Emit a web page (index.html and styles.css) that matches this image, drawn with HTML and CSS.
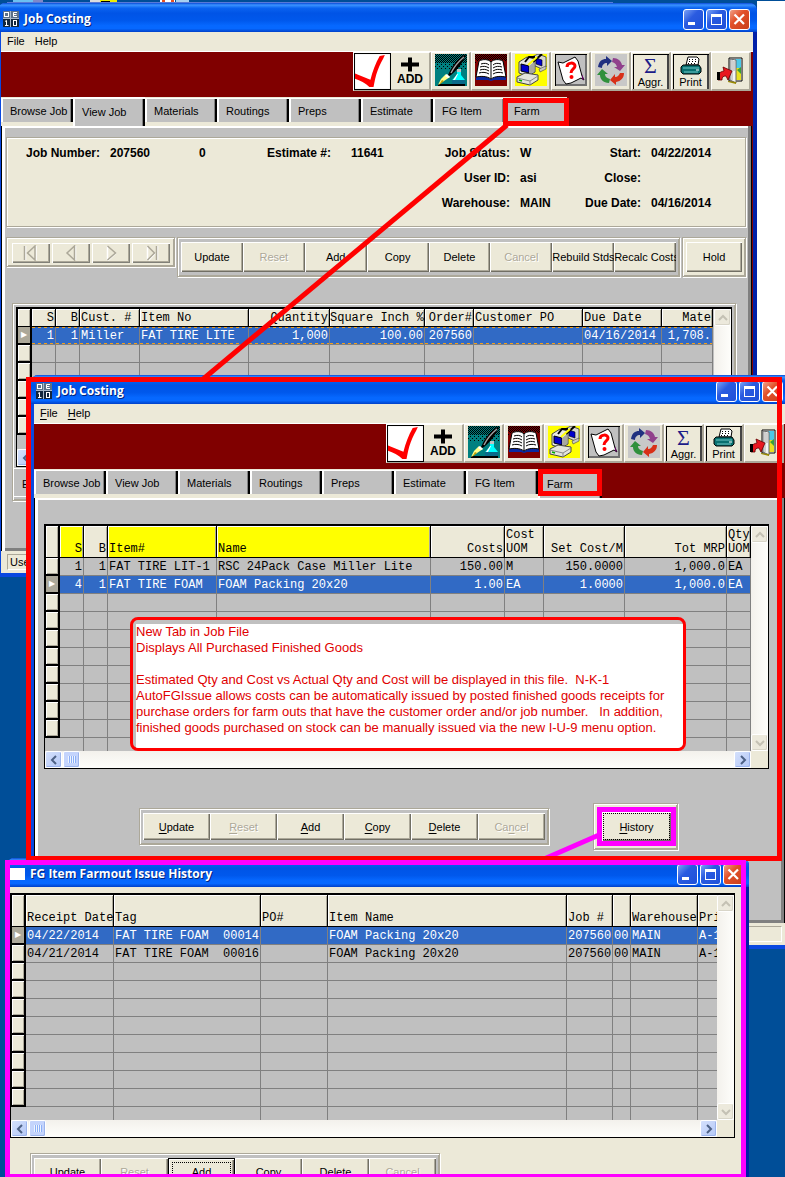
FILE: index.html
```html
<!DOCTYPE html>
<html lang="en">
<head>
<meta charset="utf-8">
<title>Job Costing</title>
<link rel="stylesheet" href="styles.css">
</head>
<body>
<svg class="defs" aria-hidden="true">
  <defs>
    <pattern id="dots" width="2" height="2" patternUnits="userSpaceOnUse"><path d="M0 0h1v1h-1zM1 1h1v1h-1z" fill="#000"/></pattern>
    <pattern id="dots2" width="4" height="4" patternUnits="userSpaceOnUse"><path d="M0 0h1v1h-1zM2 2h1v1h-1z" fill="#000"/></pattern>
  </defs>
  <symbol id="i-app" viewBox="0 0 16 16">
    <rect width="16" height="16" fill="#a8b8c8"/>
    <path d="M0 0h7v7H0zM8 0h8v7H8z" fill="#5c7088"/><path d="M0 8h7v8H0zM8 8h8v8H8z" fill="#12263e"/>
    <g fill="none" stroke="#fff" stroke-width="1"><rect x="1.500" y="1.500" width="4" height="4"/><path d="M14 1.500h-3.500v4H14M11 3.500h2.500M2 10.500l1.500-1v5M2 14.500h3.500"/><rect x="10.500" y="9.500" width="3" height="5"/></g>
  </symbol>
  <symbol id="i-check" viewBox="0 0 36 36">
    <rect x=".5" y=".5" width="35" height="35" fill="#fff" stroke="#000"/>
    <path d="M1 20l15 6c2-8 5-16 9-23l5-1c-2 5-5 9-7 15-2 5-3 11-4 16h-4C11 29 6 27 1 25z" fill="#f00"/>
  </symbol>
  <symbol id="i-plus" viewBox="0 0 18 16"><path d="M7 1h4v5h7v4h-7v5H7v-5H0V6h7z" fill="#000"/></symbol>
  <symbol id="i-pen" viewBox="0 0 32 32">
    <rect width="32" height="32" fill="#008080"/><rect width="32" height="9" fill="url(#dots)"/><rect y="9" width="32" height="6" fill="url(#dots2)"/>
    <path d="M3 30h27v2H3z" fill="#000"/>
    <path d="M31 0C24 4 18 10 14 19l-2 4 4-2c7-6 12-12 15-21z" fill="#000"/>
    <path d="M29 3c-5 4-10 10-13 16" stroke="#a0a0a0" fill="none" stroke-width="1.500"/>
    <path d="M11 20l4 3-6 4-6 4 3-6z" fill="#ff8"/><path d="M12 20l3 3-2 1-3-2z" fill="#fff"/><path d="M7 26l-3 5 5-4z" fill="#c0a000"/>
    <path d="M22 16h4v5l4 5v4H17v-4l5-5z" fill="#0ff"/><path d="M22 15h4v3h-4z" fill="#c0c0c0"/><path d="M17 26h13v4H17z" fill="#0a6a8a"/><path d="M22 20l-4 6h2l3-6z" fill="#fff"/>
  </symbol>
  <symbol id="i-book" viewBox="0 0 32 32">
    <rect width="32" height="32" fill="#800000"/><rect width="32" height="6" fill="url(#dots)"/><rect y="6" width="32" height="4" fill="url(#dots2)"/>
    <path d="M1 23h30v3H19l-3 1-3-1H1z" fill="#0a2aa0"/>
    <path d="M4 7c4-2 9-2 12 1 3-3 8-3 12-1l3 16c-5-1-11-1-15 2-4-3-10-3-15-2z" fill="#fff" stroke="#000"/>
    <path d="M16 8v16M6 10c3-1 6-1 8 1M5 13c3-1 6-1 9 1M5 16c3-1 6-1 9 1M4 19c3-1 7-1 10 1M26 10c-3-1-6-1-8 1M27 13c-3-1-6-1-9 1M27 16c-3-1-6-1-9 1M28 19c-3-1-7-1-10 1" fill="none" stroke="#000"/>
  </symbol>
  <symbol id="i-pcs" viewBox="0 0 32 32">
    <rect width="32" height="32" fill="#ff0"/>
    <path d="M17 3l6-3 8 3v10l-4 2-9-4z" fill="#d8d8d0" stroke="#555"/><path d="M21 4l6 2v6l-6-2z" fill="#00c" stroke="#000" stroke-width=".6"/><path d="M24 15l7-3v3l-6 3z" fill="#c8c8c0" stroke="#444" stroke-width=".6"/>
    <path d="M4 8l8-5 8 2v13l-7 4-9-3z" fill="#e8e8e0" stroke="#444"/><path d="M6 10l8 2v7l-8-2z" fill="#00c" stroke="#000"/><path d="M14 12l5-4v10l-5 3z" fill="#a8a8a0"/>
    <path d="M2 23l8-4 13 2v5l-8 5-13-3z" fill="#e4e4dc" stroke="#444"/><path d="M2 24l13 3 8-5M15 27v4" fill="none" stroke="#888"/><path d="M4 26l3 1" stroke="#0a0" stroke-width="1.500"/>
    <path d="M10 8L14 3 20 3M18 8L27 0" fill="none" stroke="#000" stroke-width="2"/><path d="M13 11L22 3" stroke="#ff0" stroke-width="2"/>
  </symbol>
  <symbol id="i-ask" viewBox="0 0 32 32">
    <rect x=".5" y=".5" width="31" height="31" fill="#c0c0c0" stroke="#000"/><path d="M1 31h30V1" fill="none" stroke="#707070" stroke-width="2"/>
    <path d="M3 8l5 1 12-6 3 4 4 15 2 4-3-2-10 5-5 1-3-4z" fill="#fff" stroke="#000"/><path d="M27 20l2 6-2-1z" fill="#606"/>
    <path d="M12 13c0-5 8-5 8-1 0 3-4 3-4 7" fill="none" stroke="#f00" stroke-width="3"/><circle cx="16.500" cy="23" r="2" fill="#f00"/>
  </symbol>
  <symbol id="i-cycle" viewBox="0 0 32 32">
    <rect width="32" height="32" fill="#c8c8c8"/>
    <path d="M3 13C4 7 7 5 11 5V2l6 5-5 5V9c-3 0-5 2-5 5z" fill="#203080"/>
    <path d="M18 4c5 0 8 3 9 7h3l-5 6-6-4h3c-1-3-2-4-5-5z" fill="#90408c"/>
    <path d="M29 19c0 5-3 8-8 9v3l-6-5 5-6v3c3 0 4-2 5-4z" fill="#d83018"/>
    <path d="M14 29c-6 0-9-4-9-8H2l5-6 6 5h-3c0 3 2 4 5 5z" fill="#30903c"/>
  </symbol>
  <symbol id="i-print" viewBox="0 0 22 20">
    <path d="M6 9L8 1h9l2 2-1 6z" fill="#fff" stroke="#000"/><path d="M9 3.500h1M12 3.500h1M15 3.500h1M9 5.500h1M12 5.500h1M15 5.500h1M8 7.500h1M11 7.500h1M14 7.500h1" stroke="#000"/>
    <path d="M3 9h16l2 3v4l-2 2H3l-2-2v-5z" fill="#087070" stroke="#000"/><path d="M3 12h16M4 16h14" stroke="#70c8c8"/><path d="M16 14h3" stroke="#fff"/>
  </symbol>
  <symbol id="i-exit" viewBox="0 0 32 32">
    <path d="M14 4h13v23H14z" fill="#fff" stroke="#000"/><path d="M20 5h6v9h-6z" fill="#4cc8e8"/><path d="M20 14h6v12h-6z" fill="#e8e020"/><path d="M22 16l4-3v7z" fill="#38a038"/>
    <path d="M15 5l6 1v23l-6-3z" fill="#f4f4f4" stroke="#666"/><path d="M17 6v20M19 7v10" stroke="#aaa" fill="none"/><path d="M13 27l8 1v2l-8-2z" fill="#988800"/>
    <path d="M3 26c0-6 1-8 6-9l-1-4 9 4-4 9-2-4c-3 0-4 1-4 4z" fill="#e81820" stroke="#600" stroke-width=".8"/><path d="M2 18h3v8H2z" fill="#000"/>
  </symbol>
  <symbol id="i-min" viewBox="0 0 21 21"><path d="M5 13h7v3H5z" fill="#fff"/></symbol>
  <symbol id="i-max" viewBox="0 0 21 21"><path d="M5 5h11v11H5zM6 8v7h9V8z" fill="#fff" fill-rule="evenodd"/></symbol>
  <symbol id="i-close" viewBox="0 0 21 21"><path d="M5.500 5.500l9.500 9.500M15 5.500L5.500 15" stroke="#fff" stroke-width="2.200"/></symbol>
  <symbol id="i-chev" viewBox="0 0 10 10"><path d="M7 1L3 5l4 4" fill="none" stroke="currentColor" stroke-width="2"/></symbol>
  <symbol id="i-prev" viewBox="0 0 22 16"><path d="M15.500 1v14" fill="none" stroke="#fff" stroke-width="1.500"/><path d="M14.500 1v14L7 8z" fill="none" stroke="#aca899" stroke-width="1.500"/></symbol>
  <symbol id="i-next" viewBox="0 0 22 16"><path d="M16 8L8 15.500M7.500 1v14" fill="none" stroke="#fff" stroke-width="1.500"/><path d="M7.500 1l8 7-8 7" fill="none" stroke="#aca899" stroke-width="1.500"/></symbol>
  <symbol id="i-first" viewBox="0 0 22 16"><path d="M5.500 1v14M16 1v14" fill="none" stroke="#fff" stroke-width="1.500"/><path d="M4.500 1v14M15 1v14L7.500 8z" fill="none" stroke="#aca899" stroke-width="1.500"/></symbol>
  <symbol id="i-last" viewBox="0 0 22 16"><path d="M17.500 1v14M7.500 1v14M15.500 8l-7 7.500" fill="none" stroke="#fff" stroke-width="1.500"/><path d="M7.500 1l7 7-7 7M16.500 1v14" fill="none" stroke="#aca899" stroke-width="1.500"/></symbol>
</svg>

<main class="desktop">
  <svg class="shortcuts" viewBox="0 0 620 4" aria-hidden="true">
    <path d="M13 0h20v4H13z" fill="#6cc0f0"/><path d="M33 0h10v4H33z" fill="#8088c8"/>
    <path d="M90 0h10v4H90z" fill="#ddd"/><path d="M100 0h17v4h-17z" fill="#ee0"/><path d="M101 1h9v2h-9z" fill="#000"/>
    <path d="M160 0h15v4h-15z" fill="#fff"/><path d="M162 0h3v4h-3zM171 0h3v4h-3z" fill="#e85020"/><path d="M176 0h13v4h-13z" fill="#a8d0f0"/>
    <path d="M7 2h606v1H7z" fill="#5878d8"/>
  </svg>
  <div class="sheet"></div>

  <section class="window window-job">
    <header class="titlebar">
      <svg class="app-icon"><use href="#i-app"/></svg><h1>Job Costing</h1>
      <button class="sys" aria-label="Minimize"><svg><use href="#i-min"/></svg></button><button class="sys" aria-label="Maximize"><svg><use href="#i-max"/></svg></button><button class="sys sys-close" aria-label="Close"><svg><use href="#i-close"/></svg></button>
    </header>
    <nav class="menubar"><button>File</button><button>Help</button></nav>
    <div class="toolbar">
      <button class="tool tool-check" aria-label="Check"><svg><use href="#i-check"/></svg></button>
      <button class="tool tool-add"><svg><use href="#i-plus"/></svg><span>ADD</span></button>
      <button class="tool" aria-label="Notes"><svg><use href="#i-pen"/></svg></button>
      <button class="tool" aria-label="Log"><svg><use href="#i-book"/></svg></button>
      <button class="tool" aria-label="Transfer"><svg><use href="#i-pcs"/></svg></button>
      <button class="tool" aria-label="Question"><svg><use href="#i-ask"/></svg></button>
      <button class="tool" aria-label="Refresh"><svg><use href="#i-cycle"/></svg></button>
      <button class="tool tool-text"><span class="sigma">Σ</span><span>Aggr.</span></button>
      <button class="tool tool-text"><svg><use href="#i-print"/></svg><span>Print</span></button>
      <button class="tool" aria-label="Exit"><svg><use href="#i-exit"/></svg></button>
    </div>
    <nav class="tabs">
      <button class="tab">Browse Job</button><button class="tab active">View Job</button><button class="tab">Materials</button><button class="tab">Routings</button><button class="tab">Preps</button><button class="tab">Estimate</button><button class="tab">FG Item</button><button class="tab tab-last">Farm<i class="mark"></i></button>
    </nav>
    <div class="body body-job">
      <dl class="info">
        <dt>Job Number:</dt><dd>207560</dd><dd>0</dd><dt>Estimate #:</dt><dd class="est">11641</dd><dt>Job Status:</dt><dd>W</dd><dt>Start:</dt><dd>04/22/2014</dd>
        <dt class="c6">User ID:</dt><dd>asi</dd><dt>Close:</dt><dd></dd>
        <dt class="c6">Warehouse:</dt><dd>MAIN</dd><dt>Due Date:</dt><dd>04/16/2014</dd>
      </dl>
      <div class="actions">
        <div class="etched pager">
          <button disabled aria-label="First"><svg><use href="#i-first"/></svg></button><button disabled aria-label="Previous"><svg><use href="#i-prev"/></svg></button><button disabled aria-label="Next"><svg><use href="#i-next"/></svg></button><button disabled aria-label="Last"><svg><use href="#i-last"/></svg></button>
        </div>
        <div class="etched group group-wide">
          <button class="btn">Update</button><button class="btn" disabled>Reset</button><button class="btn">Add</button><button class="btn">Copy</button><button class="btn">Delete</button><button class="btn" disabled>Cancel</button><button class="btn">Rebuild Stds</button><button class="btn">Recalc Costs</button>
        </div>
        <div class="etched group hold"><button class="btn">Hold</button></div>
      </div>
      <div class="frame etched">
        <div class="browse browse-short">
          <div class="view">
            <table>
              <colgroup><col class="w15"><col class="w24"><col class="w24"><col class="w60"><col class="w109"><col class="w81"><col class="w95"><col class="w49"><col class="w109"><col class="w79"><col class="w51"></colgroup>
              <thead><tr><th></th><th class="r">S</th><th class="r">B</th><th>Cust. #</th><th>Item No</th><th class="r">Quantity</th><th class="r">Square Inch %</th><th class="r">Order#</th><th>Customer PO</th><th>Due Date</th><th class="r">Mate</th></tr></thead>
              <tbody>
                <tr class="selected dashed"><td>▶</td><td class="r">1</td><td class="r">1</td><td>Miller</td><td>FAT TIRE LITE</td><td class="r">1,000</td><td class="r">100.00</td><td class="r">207560</td><td></td><td>04/16/2014</td><td class="r">1,708.</td></tr>
                <tr><td><td><td><td><td><td><td><td><td><td><td></tr>
                <tr><td><td><td><td><td><td><td><td><td><td><td></tr>
                <tr><td><td><td><td><td><td><td><td><td><td><td></tr>
                <tr><td><td><td><td><td><td><td><td><td><td><td></tr>
                <tr><td><td><td><td><td><td><td><td><td><td><td></tr>
              </tbody>
            </table>
          </div>
          <div class="vscroll"><button aria-label="Scroll up"><svg class="up"><use href="#i-chev"/></svg></button><button aria-label="Scroll down"><svg class="down"><use href="#i-chev"/></svg></button></div>
          <div class="hscroll"><button aria-label="Scroll left"><svg><use href="#i-chev"/></svg></button><span class="thumb"></span><button class="end" aria-label="Scroll right"><svg class="right"><use href="#i-chev"/></svg></button></div>
        </div>
        <p class="hint">E</p>
      </div>
    </div>
    <footer class="status"><span>Use</span></footer>
  </section>

  <section class="window window-farm">
    <header class="titlebar">
      <svg class="app-icon"><use href="#i-app"/></svg><h2>Job Costing</h2>
      <button class="sys" aria-label="Minimize"><svg><use href="#i-min"/></svg></button><button class="sys" aria-label="Maximize"><svg><use href="#i-max"/></svg></button><button class="sys sys-close" aria-label="Close"><svg><use href="#i-close"/></svg></button>
    </header>
    <nav class="menubar"><button><u>F</u>ile</button><button><u>H</u>elp</button></nav>
    <div class="toolbar">
      <button class="tool tool-check" aria-label="Check"><svg><use href="#i-check"/></svg></button>
      <button class="tool tool-add"><svg><use href="#i-plus"/></svg><span>ADD</span></button>
      <button class="tool" aria-label="Notes"><svg><use href="#i-pen"/></svg></button>
      <button class="tool" aria-label="Log"><svg><use href="#i-book"/></svg></button>
      <button class="tool" aria-label="Transfer"><svg><use href="#i-pcs"/></svg></button>
      <button class="tool" aria-label="Question"><svg><use href="#i-ask"/></svg></button>
      <button class="tool" aria-label="Refresh"><svg><use href="#i-cycle"/></svg></button>
      <button class="tool tool-text"><span class="sigma">Σ</span><span>Aggr.</span></button>
      <button class="tool tool-text"><svg><use href="#i-print"/></svg><span>Print</span></button>
      <button class="tool" aria-label="Exit"><svg><use href="#i-exit"/></svg></button>
    </div>
    <nav class="tabs">
      <button class="tab">Browse Job</button><button class="tab">View Job</button><button class="tab">Materials</button><button class="tab">Routings</button><button class="tab">Preps</button><button class="tab">Estimate</button><button class="tab">FG Item</button><button class="tab tab-last active">Farm<i class="mark"></i></button>
    </nav>
    <div class="body body-farm">
      <div class="browse">
        <div class="view">
          <table class="tall">
            <colgroup><col class="w15"><col class="w24"><col class="w24"><col class="w109"><col class="w214"><col class="w74"><col class="w39"><col class="w81"><col class="w102"><col class="w24"></colgroup>
            <thead><tr><th></th><th class="r key">S</th><th class="r">B</th><th class="key">Item#</th><th class="key">Name</th><th class="r">Costs</th><th>Cost<br>UOM</th><th class="r">Set Cost/M</th><th class="r">Tot MRP</th><th>Qty<br>UOM</th></tr></thead>
            <tbody>
              <tr><td></td><td class="r">1</td><td class="r">1</td><td>FAT TIRE LIT-1</td><td>RSC 24Pack Case Miller Lite</td><td class="r">150.00</td><td>M</td><td class="r">150.0000</td><td class="r">1,000.0</td><td>EA</td></tr>
              <tr class="selected"><td>▶</td><td class="r">4</td><td class="r">1</td><td>FAT TIRE FOAM</td><td>FOAM Packing 20x20</td><td class="r">1.00</td><td>EA</td><td class="r">1.0000</td><td class="r">1,000.0</td><td>EA</td></tr>
              <tr><td><td><td><td><td><td><td><td><td><td></tr>
              <tr><td><td><td><td><td><td><td><td><td><td></tr>
              <tr><td><td><td><td><td><td><td><td><td><td></tr>
              <tr><td><td><td><td><td><td><td><td><td><td></tr>
              <tr><td><td><td><td><td><td><td><td><td><td></tr>
              <tr><td><td><td><td><td><td><td><td><td><td></tr>
              <tr><td><td><td><td><td><td><td><td><td><td></tr>
              <tr><td><td><td><td><td><td><td><td><td><td></tr>
              <tr class="part"><td><td><td><td><td><td><td><td><td><td></tr>
            </tbody>
          </table>
        </div>
        <div class="vscroll"><button aria-label="Scroll up"><svg class="up"><use href="#i-chev"/></svg></button><button aria-label="Scroll down"><svg class="down"><use href="#i-chev"/></svg></button></div>
        <div class="hscroll"><button aria-label="Scroll left"><svg><use href="#i-chev"/></svg></button><span class="thumb"></span><button class="end" aria-label="Scroll right"><svg class="right"><use href="#i-chev"/></svg></button></div>
      </div>
      <div class="farm-actions">
        <div class="etched group">
          <button class="btn"><u>U</u>pdate</button><button class="btn" disabled><u>R</u>eset</button><button class="btn"><u>A</u>dd</button><button class="btn"><u>C</u>opy</button><button class="btn"><u>D</u>elete</button><button class="btn" disabled>Ca<u>n</u>cel</button>
        </div>
        <div class="etched history"><button class="btn"><u>H</u>istory</button></div>
      </div>
    </div>
    <footer class="status"><span></span></footer>
  </section>

  <aside class="note">
    <p>New Tab in Job File
Displays All Purchased Finished Goods

Estimated Qty and Cost vs Actual Qty and Cost will be displayed in this file.  N-K-1
AutoFGIssue allows costs can be automatically issued by posted finished goods receipts for
purchase orders for farm outs that have the customer order and/or job number.   In addition,
finished goods purchased on stock can be manually issued via the new I-U-9 menu option.</p>
  </aside>

  <section class="window window-history">
    <header class="titlebar">
      <span class="blank-icon"></span><h2>FG Item Farmout Issue History</h2>
      <button class="sys" aria-label="Minimize"><svg><use href="#i-min"/></svg></button><button class="sys" aria-label="Maximize"><svg><use href="#i-max"/></svg></button><button class="sys sys-close" aria-label="Close"><svg><use href="#i-close"/></svg></button>
    </header>
    <div class="body-history">
      <div class="browse">
        <div class="view">
          <table class="tall">
            <colgroup><col class="w15"><col class="w88"><col class="w147"><col class="w67"><col class="w239"><col class="w46"><col class="w18"><col class="w67"><col class="w24"></colgroup>
            <thead><tr><th></th><th>Receipt Date</th><th>Tag</th><th>PO#</th><th>Item Name</th><th>Job #</th><th></th><th>Warehouse</th><th>Pri</th></tr></thead>
            <tbody>
              <tr class="selected"><td>▶</td><td>04/22/2014</td><td>FAT TIRE FOAM  00014</td><td></td><td>FOAM Packing 20x20</td><td>207560</td><td>00</td><td>MAIN</td><td>A-1</td></tr>
              <tr><td></td><td>04/21/2014</td><td>FAT TIRE FOAM  00016</td><td></td><td>FOAM Packing 20x20</td><td>207560</td><td>00</td><td>MAIN</td><td>A-1</td></tr>
              <tr><td><td><td><td><td><td><td><td><td></tr>
              <tr><td><td><td><td><td><td><td><td><td></tr>
              <tr><td><td><td><td><td><td><td><td><td></tr>
              <tr><td><td><td><td><td><td><td><td><td></tr>
              <tr><td><td><td><td><td><td><td><td><td></tr>
              <tr><td><td><td><td><td><td><td><td><td></tr>
              <tr><td><td><td><td><td><td><td><td><td></tr>
              <tr><td><td><td><td><td><td><td><td><td></tr>
              <tr class="part"><td><td><td><td><td><td><td><td><td></tr>
            </tbody>
          </table>
        </div>
        <div class="vscroll"><button aria-label="Scroll up"><svg class="up"><use href="#i-chev"/></svg></button><button aria-label="Scroll down"><svg class="down"><use href="#i-chev"/></svg></button></div>
        <div class="hscroll"><button aria-label="Scroll left"><svg><use href="#i-chev"/></svg></button><span class="thumb"></span><button class="end" aria-label="Scroll right"><svg class="right"><use href="#i-chev"/></svg></button></div>
      </div>
      <div class="etched group">
        <button class="btn">Update</button><button class="btn" disabled>Reset</button><button class="btn focused">Add</button><button class="btn">Copy</button><button class="btn">Delete</button><button class="btn" disabled>Cancel</button>
      </div>
    </div>
  </section>

  <svg class="connectors" width="785" height="1177" aria-hidden="true">
    <path d="M507 125L202 380" stroke="#f00" stroke-width="5"/>
    <path d="M599 835L544 859" stroke="#f0f" stroke-width="5"/>
  </svg>
  <div class="outline outline-farm"></div>
  <div class="outline outline-history"></div>
</main>
</body>
</html>
```
FILE: styles.css
```css
* { box-sizing: border-box; }
body { margin: 0; font: 11px/14px "Liberation Sans", Arial, sans-serif; color: #000; }
button { font: inherit; color: inherit; margin: 0; padding: 0; border: 0; background: none; }
svg { display: block; }
h1, h2, p, dl, dd { margin: 0; }
.defs { position: absolute; width: 0; height: 0; }

.desktop { position: relative; height: 100vh; min-height: 1177px; overflow: hidden; background: #004e98; }
.shortcuts { position: absolute; left: 0; top: 0; width: 620px; height: 4px; }
.sheet { position: absolute; right: 0; top: 1px; width: 28px; height: 375px; background: #fff; }

/* Windows */
.window { position: absolute; background: #ece9d8; border: solid #0a48e0; border-width: 0 4px 4px 3px; border-right-color: #0020a8; border-radius: 7px 7px 0 0; box-shadow: inset 0 1px #0a48e0; }
.window-job { left: -2px; right: 28px; top: 3px; }
.window-farm { left: 31px; right: -5px; top: 375px; }
.window-history { left: 7px; right: 36px; top: 858px; }
.titlebar { display: flex; align-items: center; gap: 2px; height: 29px; margin: 0 -4px 0 -3px; padding: 3px 7px 0 5px; border-radius: 7px 7px 0 0;
  background: linear-gradient(#0a4ad8 0, #3a93ff 7%, #0a62f0 18%, #0054e6 35%, #0058ec 60%, #0668ff 78%, #0668ff 88%, #0040c8 100%); }
.window-history .titlebar { padding: 3px 5px 0 3px; }
.titlebar h1, .titlebar h2 { flex: 1; margin-left: 3px; font: bold 12px/16px "Open Sans", "Noto Sans", sans-serif; color: #fff; text-shadow: 1px 1px #00247c; white-space: nowrap; }
.app-icon { width: 16px; height: 16px; }
.blank-icon { width: 15px; height: 12px; background: #fff; }
.sys { width: 21px; height: 21px; border: 1px solid #fff; border-radius: 3px; background: linear-gradient(135deg, #7ba2f5, #2a5be0 40%, #1e50d8); }
.sys svg { width: 21px; height: 21px; margin: -1px; }
.sys-close { background: linear-gradient(135deg, #f0a088, #e2512a 40%, #c8401c); }
.menubar { display: flex; gap: 10px; height: 20px; padding: 0 6px 1px; border-bottom: 1px solid #fff; line-height: 18px; }
u { text-decoration: underline; text-underline-offset: 2px; }

.toolbar { display: flex; justify-content: flex-end; height: 45px; padding: 0 2px 6px 0; background: #800000; }
.tool { display: flex; flex-direction: column; align-items: center; width: 40px; height: 39px; padding-top: 1px; background: #ece9d8; border: solid #aca899; border-width: 1px 2px 2px 1px; border-top-color: #fff; border-left-color: #fff; }
.tool svg { width: 32px; height: 32px; }
.tool-check { width: 38px; padding: 0; border-width: 1px 0 1px 1px; }
.tool-check svg { width: 37px; height: 37px; }
.tool-add { padding-top: 3px; font-weight: bold; font-size: 12px; line-height: 13px; border-left: 0; }
.tool-add svg { width: 18px; height: 17px; }
.tool-text { padding: 1px 0 0; font-size: 11px; line-height: 12px; box-shadow: inset 1px 1px #ece9d8, inset 2px 2px #000, inset -2px 0 #444; }
.tool-text svg { width: 22px; height: 20px; margin-top: 2px; }
.sigma { height: 22px; font: 22px/24px "Liberation Serif", serif; color: #1c1c88; }

.tabs { display: flex; align-items: flex-end; height: 29px; background: linear-gradient(#800000, #800000) right / calc(100% - 566px) 100% no-repeat, #ece9d8; }
.tab { flex: none; width: 72px; height: 24px; margin-bottom: 4px; padding: 1px 0 0 7px; text-align: left; white-space: nowrap; overflow: hidden; background: #c0c0c0; border: solid #fff; border-width: 1px 0 0 2px; box-shadow: inset -2px 0 #000, inset -3px 0 #808080; }
.tab.active { height: 29px; margin-bottom: 0; padding-bottom: 2px; border-top-width: 2px; position: relative; }
.tab-last { position: relative; width: 64px; overflow: visible; }
.mark { position: absolute; inset: -1px 0 -4px -4px; border: 5px solid #f00; }
.active .mark { inset: -2px 0 2px -2px; }

.body { background: #c0c0c0; box-shadow: inset -1px 0 #800000, inset -2px 0 #000, inset -5px 0 #808080, inset 1px 0 #000, inset 4px 0 #fff, inset 0 2px #fff, inset 0 -3px #808080; min-height: 425px; }
.status { height: 22px; padding: 3px 4px 3px 6px; display: flex; }
.status span { flex: 1; border: 1px solid; border-color: #aca899 #fff #fff #aca899; line-height: 14px; padding-left: 2px; }

.etched { border: 1px solid #aca899; box-shadow: inset 1px 1px #fff, inset -1px -1px #aca899, 1px 1px #fff; }

/* Job header */
.body-job { padding: 11px 7px 0 5px; }
.info { display: grid; grid-template-columns: 93px 89px 33px 109px 86px 93px 95px 36px 1fr; grid-auto-rows: 25px; align-items: center; height: 90px; padding-top: 2px; background: #ece9d8; border: 1px solid #aca899; box-shadow: inset 1px 1px #fff, 1px 1px #fff; font-weight: bold; font-size: 12px; line-height: 14px; white-space: nowrap; }
.info dt { justify-self: end; }
.info dd { padding-left: 10px; }
.info .est { padding-left: 20px; }
.info .c6 { grid-column: 6; }

.actions { display: flex; align-items: flex-start; gap: 2px; margin-top: 10px; }
.pager { display: flex; gap: 2px; padding: 5px 4px 4px 5px; background: #ece9d8; height: 30px; }
.pager button { display: flex; align-items: center; justify-content: center; width: 38px; height: 20px; background: #ece9d8; box-shadow: inset 1px 1px #fff, inset -1px -1px #808078, inset -2px -2px #aca899; }
.pager svg { width: 22px; height: 16px; }
.group { display: flex; padding: 4px 3px; background: #c0c0c0; }
.btn { width: 67px; height: 27px; overflow: hidden; white-space: nowrap; background: #ece9d8; box-shadow: inset 1px 1px #fff, inset -1px -1px #716f64, inset -2px -2px #aca899; }
.btn:disabled { color: #aca899; text-shadow: 1px 1px #fff; }
.group-wide { flex: 1; min-width: 0; }
.group-wide .btn { flex: 1; width: 0; min-width: 0; height: 30px; }
.hold { flex: none; width: 64px; background: #ece9d8; }
.hold .btn { width: 100%; height: 30px; }

/* Browse grids */
.frame { margin: 26px 10px 0 6px; padding: 3px; }
.browse { display: grid; grid-template: 1fr 17px / 1fr 17px; height: 245px; border: solid #000; border-width: 2px 1px 1px; background: #ece9d8; }
.browse-short { height: 160px; }
.view { overflow: hidden; min-width: 0; min-height: 0; background: #c0c0c0; }
table { width: 0; table-layout: fixed; border-collapse: separate; border-spacing: 0; font: 12px/14px "Liberation Mono", "Courier New", monospace; white-space: pre; }
.w15 { width: 15px; } .w18 { width: 18px; } .w24 { width: 24px; } .w39 { width: 39px; } .w46 { width: 46px; } .w49 { width: 49px; }
.w51 { width: 51px; } .w60 { width: 60px; } .w67 { width: 67px; } .w74 { width: 74px; } .w79 { width: 79px; } .w81 { width: 81px; }
.w88 { width: 88px; } .w95 { width: 95px; } .w102 { width: 102px; } .w109 { width: 109px; } .w147 { width: 147px; } .w214 { width: 214px; } .w239 { width: 239px; }
th { height: 18px; padding: 0 0 1px 1px; text-align: left; vertical-align: bottom; font-weight: normal; background: #ece9d8; border: solid #000; border-width: 0 1px 1px 0; box-shadow: inset 1px 1px #fff, inset -1px 0 #aca899; overflow: hidden; }
.tall th { height: 32px; }
.key { background: #ff0; }
td { height: 18px; padding: 0 0 0 1px; line-height: 14px; border: solid #808080; border-width: 0 1px 1px 0; overflow: hidden; }
.r { text-align: right; padding-right: 1px; padding-left: 0; }
tr > :first-child { border-color: #000; border-right-width: 2px; border-left: 1px solid #000; padding: 0; }
td:first-child { background: #ece9d8; border-bottom-width: 2px; box-shadow: inset 1px 1px #fff, inset -1px -1px #aca899; text-align: center; }
.selected { background: #316ac5; color: #fff; }
.selected td:first-child { background: #aca899; box-shadow: none; font: 8px/12px "DejaVu Sans", sans-serif; }
.dashed td:not(:first-child) { background: repeating-linear-gradient(90deg, #f0a020 0 3px, transparent 3px 6px) top / 100% 1px no-repeat, repeating-linear-gradient(90deg, #f0a020 0 3px, transparent 3px 6px) bottom / 100% 1px no-repeat; }
.part td:first-child { background: none; box-shadow: none; border-color: transparent; }

.vscroll { display: flex; flex-direction: column; justify-content: space-between; background: linear-gradient(90deg, #f3f1ec, #fefefb); }
.vscroll button, .hscroll button, .thumb { display: flex; align-items: center; justify-content: center; width: 17px; height: 17px; border: 1px solid #fff; border-radius: 2px; }
.vscroll button { background: #ece9dc; color: #c4c1b4; box-shadow: inset -1px -1px #d8d5c8; }
.hscroll { display: flex; gap: 1px; background: linear-gradient(#f3f1ec, #fefefb); }
.hscroll button, .thumb { background: linear-gradient(135deg, #d4e0fc, #b4c8f6); color: #4d6185; box-shadow: inset -1px -1px #9cb4ec; }
.thumb { background: repeating-linear-gradient(90deg, #eef4fe 0 1px, #8cb0f8 1px 2px) center / 8px 7px no-repeat, #c4d4fc; }
.hscroll .end { margin-left: auto; }
.vscroll svg, .hscroll svg { width: 10px; height: 10px; }
.up { transform: rotate(90deg); } .down { transform: rotate(-90deg); } .right { transform: rotate(180deg); }
.hint { height: 29px; margin: 1px -3px 0; padding: 8px; border: 1px solid #fff; }

/* Farm window */
.body-farm { padding: 26px 17px 0 10px; }
.farm-actions { display: flex; align-items: center; justify-content: space-between; margin: 34px 91px 0 95px; }
.history { width: 85px; padding: 3px; background: #ece9d8; }
.history .btn { display: block; width: 79px; height: 39px; border: 5px solid #f0f; outline: 1px dotted #000; outline-offset: -7px; }

.note { position: absolute; left: 130px; top: 617px; width: 556px; padding: 4px 0 0 3px; border: 3px solid #f00; border-radius: 8px; background: #c0c0c0; overflow: hidden; }
.note p { padding-bottom: 12px; background: #fff; color: #e00000; font-size: 13px; line-height: 16px; white-space: pre; }

/* History window */
.body-history { padding: 6px 10px 20px 0; }
.body-history .group { width: 410px; margin: 15px 0 0 20px; }
.focused { border: 1px solid #000; outline: 1px dotted #000; outline-offset: -5px; }

/* Callout frames */
.connectors { position: absolute; left: 0; top: 0; pointer-events: none; }
.outline { position: absolute; border: 5px solid; pointer-events: none; }
.outline-farm { left: 26px; right: 3px; top: 377px; height: 484px; color: #f00; }
.outline-history { left: 5px; right: 39px; top: 860px; bottom: -2px; color: #f0f; }
```
